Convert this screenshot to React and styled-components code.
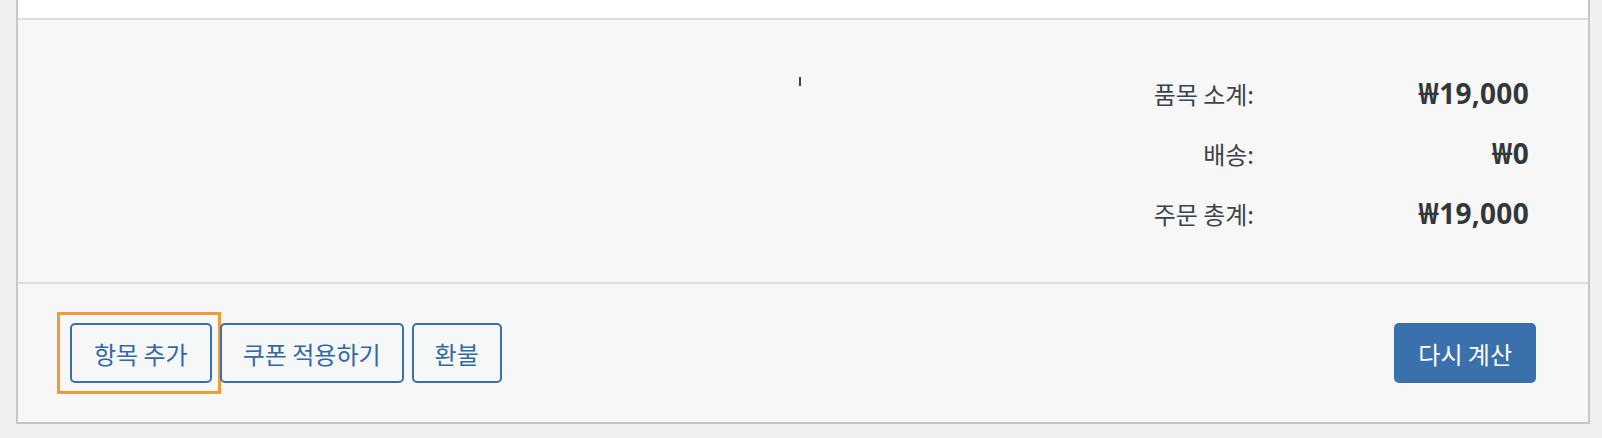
import React from 'react';
import styled, { createGlobalStyle } from 'styled-components';

const GlobalStyle = createGlobalStyle`
  html, body {
    margin: 0;
    padding: 0;
    background: #f0f0f1;
    font-family: "Noto Sans", "Noto Sans CJK KR", sans-serif;
  }
`;

const Page = styled.div`
  padding: 0 12px 13px 16px;
`;

const Box = styled.div`
  border: 2px solid #c6c6cb;
  border-top: 0;
  background: #f7f7f7;
`;

const TopStrip = styled.div`
  height: 18px;
  background: #fff;
  border-bottom: 2px solid #dcdcde;
`;

const Totals = styled.div`
  display: flex;
  padding: 43px 59px 39px 0;
  border-bottom: 2px solid #dcdcde;
`;

const Spacer = styled.div`
  flex: 1;
  padding: 14px 0 0 781px;
`;

const Tick = styled.span`
  display: block;
  width: 2px;
  height: 9px;
  background: #3c434a;
`;

const Table = styled.div`
  display: grid;
  grid-template-columns: auto 275px;
  grid-auto-rows: 60px;
  align-items: center;
`;

const Label = styled.div`
  text-align: right;
  font-family: "Noto Sans CJK KR", sans-serif;
  font-size: 24px;
  color: #3c434a;
`;

const Value = styled.div`
  text-align: right;
  font-family: "Noto Sans", "Noto Sans CJK KR", sans-serif;
  font-weight: 700;
  font-size: 28px;
  letter-spacing: 0.3px;
  color: #32373c;
`;

const Actions = styled.div`
  display: flex;
  align-items: center;
  padding: 39px 52px 39px 52px;
`;

const Left = styled.div`
  display: flex;
  gap: 8px;
  flex: 1;
`;

const Button = styled.button`
  position: relative;
  height: 60px;
  padding: 0 ${(p) => p.$pad || 21}px;
  border-radius: 5px;
  font-family: "Noto Sans CJK KR", sans-serif;
  font-size: 24px;
  cursor: pointer;
  border: 2px solid #3a6faa;
  color: ${(p) => (p.$primary ? '#fff' : '#3268a8')};
  background: ${(p) => (p.$primary ? '#3a71ad' : '#f6f7f7')};

  ${(p) =>
    p.$focused &&
    `
    &::after {
      content: '';
      position: absolute;
      top: -13px;
      left: -15px;
      right: -11px;
      bottom: -13px;
      border: 3px solid #f29a38;
      pointer-events: none;
    }
  `}
`;

const totals = [
  ['품목 소계:', '₩19,000'],
  ['배송:', '₩0'],
  ['주문 총계:', '₩19,000'],
];

export default function App() {
  return (
    <Page>
      <GlobalStyle />
      <Box>
        <TopStrip />
        <Totals>
          <Spacer>
            <Tick />
          </Spacer>
          <Table>
            {totals.map(([label, value]) => (
              <React.Fragment key={label}>
                <Label>{label}</Label>
                <Value>{value}</Value>
              </React.Fragment>
            ))}
          </Table>
        </Totals>
        <Actions>
          <Left>
            <Button $focused $pad={22}>항목 추가</Button>
            <Button $pad={21}>쿠폰 적용하기</Button>
            <Button $pad={21}>환불</Button>
          </Left>
          <Button $primary $pad={22}>다시 계산</Button>
        </Actions>
      </Box>
    </Page>
  );
}
